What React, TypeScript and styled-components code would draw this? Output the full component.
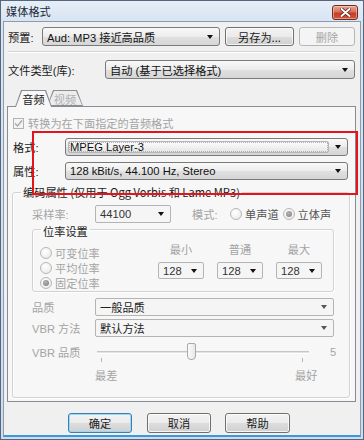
import React from 'react';
import styled, { createGlobalStyle, css } from 'styled-components';

const GlobalStyle = createGlobalStyle`
  html, body { margin: 0; padding: 0; }
  body {
    background: #ffffff;
    font-family: "Liberation Sans", "Noto Sans CJK SC", sans-serif;
    font-size: 11.2px;
    color: #1b1b1b;
  }
  * { box-sizing: border-box; }
`;

const Window = styled.div`
  width: 364px;
  height: 440px;
  border: 1px solid #56677c;
  padding: 0 2px 2px 2px;
  background: linear-gradient(to bottom, #e6eef8 0, #d8e4f2 20px, #cddcee 100%);
  display: flex;
  flex-direction: column;
  overflow: hidden;
`;

const TitleBar = styled.div`
  height: 20px;
  flex-shrink: 0;
  display: flex;
  align-items: center;
  justify-content: space-between;
  padding: 0 3px 0 3px;
`;

const Title = styled.span`
  font-family: "Noto Sans CJK SC", sans-serif;
  font-size: 11.2px;
  color: #1e2a38;
`;

const CloseButton = styled.div`
  width: 26px;
  height: 15px;
  margin-top: 2px;
  border: 1px solid #6f2b1e;
  border-radius: 3px;
  background: linear-gradient(to bottom, #eba694 0%, #d8715a 45%, #c73d25 55%, #d4553a 100%);
  box-shadow: inset 0 0 0 1px rgba(255, 220, 210, 0.5);
  display: flex;
  align-items: center;
  justify-content: center;
`;

const Client = styled.div`
  flex: 1;
  background: #f0f0f0;
  border: 1px solid #8b9cb1;
  border-bottom: 2px solid #3a9ad8;
  display: flex;
  flex-direction: column;
`;

const Row = styled.div<{ $mt: number; $pl: number; $h?: number; $top?: boolean }>`
  display: flex;
  align-items: ${p => (p.$top ? 'flex-start' : 'center')};
  flex-shrink: 0;
  margin-top: ${p => p.$mt}px;
  padding-left: ${p => p.$pl}px;
  height: ${p => p.$h ?? 19}px;
`;

const Label = styled.span<{ $w?: number; $dim?: boolean; $ml?: number }>`
  ${p => p.$w !== undefined && css`width: ${p.$w}px;`}
  flex-shrink: 0;
  margin-left: ${p => p.$ml ?? 0}px;
  white-space: nowrap;
  color: ${p => (p.$dim ? '#a4a4a4' : '#1b1b1b')};
`;

const Separator = styled.div`
  margin: 5px 0 0 4px;
  width: 347px;
  height: 2px;
  flex-shrink: 0;
  border-top: 1px solid #d4d4d4;
  border-bottom: 1px solid #ffffff;
`;

type ComboVariant = 'raised' | 'focus' | 'disabled' | 'flat';

const ComboBox = styled.div<{ $w: number; $h?: number; $variant: ComboVariant }>`
  width: ${p => p.$w}px;
  height: ${p => p.$h ?? 18}px;
  flex-shrink: 0;
  display: flex;
  align-items: center;
  padding-left: 4px;
  border-radius: 3px;
  white-space: nowrap;
  ${p =>
    p.$variant === 'raised' || p.$variant === 'focus'
      ? css`
          border: 1px solid #7a7a7a;
          background: linear-gradient(to bottom, #f9f9f9 0%, #ececec 50%, #e0e0e0 51%, #d6d6d6 100%);
          color: #111;
        `
      : css`
          border: 1px solid #b4b4b4;
          border-radius: 2px;
          background: #f5f5f5;
          color: ${p.$variant === 'disabled' ? '#333' : '#222'};
        `}
  ${p =>
    p.$variant === 'focus' &&
    css`
      padding: 2px 0 2px 2px;
    `}
`;

const ComboText = styled.span`
  flex: 1;
  overflow: hidden;
`;

const FocusField = styled.span`
  flex: 1;
  height: 100%;
  display: flex;
  align-items: center;
  padding-left: 1px;
  border: 1px solid #b3b7bc;
  border-radius: 2px;
  background: linear-gradient(to bottom, #fcfcfc, #e6e6e6);
  outline: 1px dotted #b0b0b0;
  outline-offset: -2px;
`;

const Arrow = styled.span<{ $gray?: boolean }>`
  width: 0;
  height: 0;
  flex-shrink: 0;
  margin: 0 6px 0 6px;
  border-left: 3.5px solid transparent;
  border-right: 3.5px solid transparent;
  border-top: 4px solid ${p => (p.$gray ? '#555' : '#111')};
`;

const Combo = ({
  w,
  h,
  text,
  variant = 'raised',
}: {
  w: number;
  h?: number;
  text: string;
  variant?: ComboVariant;
}) => (
  <ComboBox $w={w} $h={h} $variant={variant}>
    {variant === 'focus' ? <FocusField>{text}</FocusField> : <ComboText>{text}</ComboText>}
    <Arrow $gray={variant === 'flat'} />
  </ComboBox>
);

const Button = styled.button<{ $w: number; $ml?: number; $primary?: boolean }>`
  width: ${p => p.$w}px;
  height: 100%;
  margin-left: ${p => p.$ml ?? 0}px;
  padding: 0;
  font: inherit;
  font-family: "Noto Sans CJK SC", sans-serif;
  color: #1b1b1b;
  border: 1px solid #707070;
  border-radius: 3px;
  background: linear-gradient(to bottom, #f3f3f3 0%, #ebebeb 50%, #dddddd 51%, #d0d0d0 100%);
  box-shadow: inset 0 0 0 1px rgba(255, 255, 255, 0.75);
  ${p =>
    p.$primary &&
    css`
      border-color: #3c7fb1;
      box-shadow: inset 0 0 0 1px #9ad8f5;
    `}
  &:disabled {
    color: #a6a6a6;
    border-color: #b5b8bb;
    background: #f4f4f4;
    box-shadow: none;
  }
`;

const TabStrip = styled.div`
  display: flex;
  flex-shrink: 0;
  margin-top: 11px;
  padding-left: 11px;
  height: 16px;
  position: relative;
  z-index: 1;
`;

const tabShape = 'polygon(0 100%, 6px 0, calc(100% - 6px) 0, 100% 100%)';

const Tab = styled.div<{ $active?: boolean }>`
  position: relative;
  width: ${p => (p.$active ? 37 : 36)}px;
  height: ${p => (p.$active ? 17 : 16)}px;
  margin-left: ${p => (p.$active ? 0 : -5)}px;
  z-index: ${p => (p.$active ? 2 : 1)};
  display: flex;
  align-items: center;
  justify-content: center;
  font-family: "Noto Sans CJK SC", sans-serif;
  color: ${p => (p.$active ? '#1b1b1b' : '#b0b0b0')};
  &::before {
    content: '';
    position: absolute;
    inset: 0;
    background: #8a8d94;
    clip-path: ${tabShape};
  }
  &::after {
    content: '';
    position: absolute;
    inset: 1px 1px ${p => (p.$active ? 0 : 1)}px 1px;
    background: ${p => (p.$active ? '#f7f7f7' : '#ededed')};
    clip-path: ${tabShape};
  }
  span {
    position: relative;
    z-index: 1;
    padding-top: 1px;
  }
`;

const Panel = styled.div`
  position: relative;
  flex-shrink: 0;
  margin-left: 3px;
  width: 349px;
  height: 296px;
  border: 1px solid #898c95;
  background: #f7f7f7;
  display: flex;
  flex-direction: column;
`;

const Annotation = styled.div`
  position: absolute;
  left: 24px;
  top: 24px;
  width: 326px;
  height: 64px;
  border: 2px solid #e3151c;
  pointer-events: none;
`;

const CheckBox = styled.span`
  width: 11px;
  height: 11px;
  flex-shrink: 0;
  margin-right: 4px;
  border: 1px solid #b3b3b3;
  background: #f4f4f4;
  display: flex;
  align-items: center;
  justify-content: center;
`;

const Group = styled.fieldset<{ $ml: number; $w: number; $pb: number }>`
  margin: 0 0 0 ${p => p.$ml}px;
  width: ${p => p.$w}px;
  padding: 0 0 ${p => p.$pb}px 0;
  border: 1px solid #d2d2d2;
  border-radius: 3px;
  box-shadow: inset 1px 1px 0 #ffffff, 1px 1px 0 #ffffff;
  min-width: 0;
  flex-shrink: 0;
`;

const Legend = styled.legend<{ $lh: number; $shift?: number }>`
  margin-left: 8px;
  padding: 0 2px;
  line-height: ${p => p.$lh}px;
  font-family: "Noto Sans CJK SC", "Liberation Sans", sans-serif;
  position: relative;
  top: ${p => p.$shift ?? 0}px;
`;

const RadioDot = styled.span<{ $checked?: boolean }>`
  width: 12px;
  height: 12px;
  flex-shrink: 0;
  border-radius: 50%;
  border: 1px solid #b7b7b7;
  background: radial-gradient(circle at 40% 35%, #ffffff, #e6e6e6);
  display: flex;
  align-items: center;
  justify-content: center;
  &::after {
    content: '';
    display: ${p => (p.$checked ? 'block' : 'none')};
    width: 6px;
    height: 6px;
    border-radius: 50%;
    background: radial-gradient(circle at 40% 35%, #b4b4b4, #7c7c7c);
  }
`;

const Radio = styled.label<{ $dim?: boolean; $ml?: number }>`
  display: flex;
  align-items: center;
  gap: 3px;
  margin-left: ${p => p.$ml ?? 0}px;
  white-space: nowrap;
  color: ${p => (p.$dim ? '#a4a4a4' : '#555')};
`;

const BitrateBody = styled.div`
  display: flex;
`;

const RadioColumn = styled.div`
  width: 125px;
  padding-left: 7px;
  margin-top: 10px;
  display: flex;
  flex-direction: column;
  ${Radio} {
    height: 15px;
  }
`;

const BitColumn = styled.div<{ $ml: number }>`
  width: 46px;
  margin-left: ${p => p.$ml}px;
  margin-top: 8px;
  display: flex;
  flex-direction: column;
  align-items: center;
  span.head {
    height: 14px;
    line-height: 14px;
    color: #a4a4a4;
    margin-bottom: 5px;
  }
`;

const SliderBox = styled.div`
  position: relative;
  width: 235px;
  height: 20px;
  flex-shrink: 0;
  display: flex;
  align-items: center;
`;

const SliderTrack = styled.div`
  margin-left: 2px;
  width: 212px;
  height: 3px;
  border-top: 1px solid #c6c6c6;
  border-bottom: 1px solid #ffffff;
  background: #e2e2e2;
`;

const SliderThumb = styled.div`
  position: absolute;
  left: 92px;
  top: 1px;
  width: 9px;
  height: 17px;
  border: 1px solid #a9a9a9;
  border-radius: 2px 2px 4px 4px;
  background: linear-gradient(to right, #fbfbfb, #e8e8e8);
`;

const Tick = styled.div<{ $left: number }>`
  position: absolute;
  left: ${p => p.$left}px;
  top: 16px;
  width: 1px;
  height: 4px;
  background: #b5b5b5;
`;

export default function App() {
  return (
    <>
      <GlobalStyle />
      <Window>
        <TitleBar>
          <Title>媒体格式</Title>
          <CloseButton>
            <svg width="11" height="9" viewBox="0 0 11 9">
              <path d="M1.5 1 L9.5 8 M9.5 1 L1.5 8" stroke="#5a1a10" strokeWidth="3.4" strokeLinecap="round" />
              <path d="M1.5 1 L9.5 8 M9.5 1 L1.5 8" stroke="#ffffff" strokeWidth="2" strokeLinecap="round" />
            </svg>
          </CloseButton>
        </TitleBar>
        <Client>
          <Row $mt={5} $pl={4}>
            <Label $w={34}>预置:</Label>
            <Combo w={178} h={19} text="Aud: MP3 接近高品质" />
            <Button $w={69} $ml={5}>另存为...</Button>
            <Button $w={56} $ml={5} disabled>
              删除
            </Button>
          </Row>
          <Separator />
          <Row $mt={7} $pl={4}>
            <Label $w={97}>文件类型(库):</Label>
            <Combo w={250} h={19} text="自动 (基于已选择格式)" />
          </Row>

          <TabStrip>
            <Tab $active>
              <span>音频</span>
            </Tab>
            <Tab>
              <span>视频</span>
            </Tab>
          </TabStrip>
          <Panel>
            <Row $mt={10} $pl={5} $h={12}>
              <CheckBox>
                <svg width="9" height="9" viewBox="0 0 9 9">
                  <path d="M1 4.5 L3.5 7 L8 1.5" fill="none" stroke="#a8a8a8" strokeWidth="1.4" />
                </svg>
              </CheckBox>
              <Label $dim>转换为在下面指定的音频格式</Label>
            </Row>
            <Row $mt={9} $pl={5} $h={18}>
              <Label $w={52}>格式:</Label>
              <Combo w={283} text="MPEG Layer-3" variant="focus" />
            </Row>
            <Row $mt={6} $pl={5} $h={18}>
              <Label $w={52}>属性:</Label>
              <Combo w={283} text="128 kBit/s, 44.100 Hz, Stereo" />
            </Row>

            <Row $mt={5} $pl={4} $h={213} $top>
              <Group $ml={0} $w={338} $pb={15}>
                <Legend $lh={14}>编码属性 (仅用于 Ogg Vorbis 和 Lame MP3)</Legend>
                <Row $mt={6} $pl={19} $h={18}>
                  <Label $w={63} $dim>
                    采样率:
                  </Label>
                  <Combo w={76} text="44100" variant="disabled" />
                  <Label $w={38} $ml={21} $dim>
                    模式:
                  </Label>
                  <Radio>
                    <RadioDot />
                    单声道
                  </Radio>
                  <Radio $ml={4}>
                    <RadioDot $checked />
                    立体声
                  </Radio>
                </Row>

                <Group $ml={19} $w={302} $pb={1}>
                  <Legend $lh={12} $shift={2}>
                    位率设置
                  </Legend>
                  <BitrateBody>
                    <RadioColumn>
                      <Radio $dim>
                        <RadioDot />
                        可变位率
                      </Radio>
                      <Radio $dim>
                        <RadioDot />
                        平均位率
                      </Radio>
                      <Radio $dim>
                        <RadioDot $checked />
                        固定位率
                      </Radio>
                    </RadioColumn>
                    <BitColumn $ml={0}>
                      <span className="head">最小</span>
                      <Combo w={46} h={17} text="128" variant="disabled" />
                    </BitColumn>
                    <BitColumn $ml={13}>
                      <span className="head">普通</span>
                      <Combo w={46} h={17} text="128" variant="disabled" />
                    </BitColumn>
                    <BitColumn $ml={13}>
                      <span className="head">最大</span>
                      <Combo w={46} h={17} text="128" variant="disabled" />
                    </BitColumn>
                  </BitrateBody>
                </Group>

                <Row $mt={6} $pl={19} $h={18}>
                  <Label $w={63} $dim>
                    品质
                  </Label>
                  <Combo w={239} text="一般品质" variant="flat" />
                </Row>
                <Row $mt={3} $pl={19} $h={18}>
                  <Label $w={63} $dim>
                    VBR 方法
                  </Label>
                  <Combo w={239} text="默认方法" variant="flat" />
                </Row>
                <Row $mt={5} $pl={19} $h={20}>
                  <Label $w={63} $dim>
                    VBR 品质
                  </Label>
                  <SliderBox>
                    <SliderTrack />
                    <Tick $left={6} />
                    <Tick $left={207} />
                    <SliderThumb />
                  </SliderBox>
                  <Label $dim>5</Label>
                </Row>
                <Row $mt={6} $pl={82} $h={14}>
                  <Label $w={22} $dim>
                    最差
                  </Label>
                  <Label $ml={178} $dim>
                    最好
                  </Label>
                </Row>
              </Group>
            </Row>
            <Annotation />
          </Panel>

          <Row $mt={11} $pl={64} $h={20}>
            <Button $w={64} $primary>
              确定
            </Button>
            <Button $w={64} $ml={15}>
              取消
            </Button>
            <Button $w={65} $ml={14}>
              帮助
            </Button>
          </Row>
        </Client>
      </Window>
    </>
  );
}
